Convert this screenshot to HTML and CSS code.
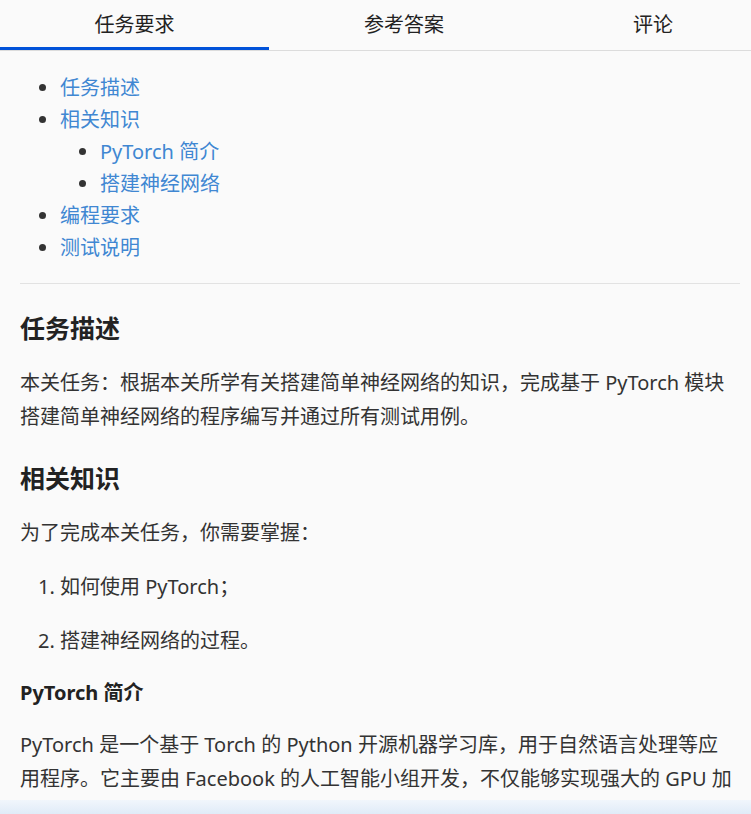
FILE: index.html
```html
<!DOCTYPE html>
<html lang="zh-CN">
<head>
<meta charset="utf-8">
<title>任务要求</title>
<link rel="stylesheet" href="styles.css">
</head>
<body>
<div class="tabs">
  <div class="tab tab-1 active">任务要求</div>
  <div class="tab tab-2">参考答案</div>
  <div class="tab tab-3">评论</div>
</div>
<div class="content">
  <ul class="toc">
    <li><a>任务描述</a></li>
    <li><a>相关知识</a>
      <ul>
        <li><a>PyTorch 简介</a></li>
        <li><a>搭建神经网络</a></li>
      </ul>
    </li>
    <li><a>编程要求</a></li>
    <li><a>测试说明</a></li>
  </ul>
  <hr class="rule">
  <h2>任务描述</h2>
  <p>本关任务：根据本关所学有关搭建简单神经网络的知识，完成基于 PyTorch 模块搭建简单神经网络的程序编写并通过所有测试用例。</p>
  <h2>相关知识</h2>
  <p>为了完成本关任务，你需要掌握：</p>
  <ol class="steps">
    <li><p>如何使用 PyTorch；</p></li>
    <li><p>搭建神经网络的过程。</p></li>
  </ol>
  <h3>PyTorch 简介</h3>
  <p>PyTorch 是一个基于 Torch 的 Python 开源机器学习库，用于自然语言处理等应用程序。它主要由 Facebook 的人工智能小组开发，不仅能够实现强大的 GPU 加速，同时还支持动态神经网络。</p>
</div>
<div class="bottom-fade"></div>
</body>
</html>
```

FILE: styles.css
```css
html, body {
  margin: 0;
  padding: 0;
  background: #fafafa;
}
body {
  font-family: "Noto Sans", "Noto Sans CJK SC", sans-serif;
  font-size: 20px;
  color: #333;
  overflow: hidden;
  height: 814px;
}
.tabs {
  display: flex;
  height: 50px;
  border-bottom: 1px solid #dcdcdc;
  width: 767px;
}
.tab {
  position: relative;
  text-align: center;
  line-height: 50px;
  font-size: 20px;
  color: #222;
  flex: none;
}
.tab-1 { width: 269px; }
.tab-2 { width: 270px; }
.tab-3 { width: 228px; }
.tab.active::after {
  content: "";
  position: absolute;
  left: 0;
  right: 0;
  bottom: 0;
  height: 3px;
  background: #0052d9;
}
.content {
  padding: 0 11px 0 20px;
}
.toc {
  margin: 21px 0 0;
  padding-left: 40px;
  line-height: 32px;
  color: #333;
  list-style: disc;
}
.toc ul {
  margin: 0;
  padding-left: 40px;
  list-style: disc;
}
.toc a {
  color: #4087d2;
  text-decoration: none;
}
.rule {
  border: 0;
  border-top: 1px solid #e2e2e2;
  margin: 19px 0 0;
  width: 720px;
}
h2 {
  font-size: 25px;
  line-height: 36px;
  font-weight: 700;
  color: #222;
  margin: 26px 0 20px;
}
h3 {
  font-size: 20px;
  line-height: 30px;
  font-weight: 700;
  color: #222;
  margin: 20px 0;
}
p {
  margin: 20px 0;
  line-height: 34px;
  width: 712px;
}
.steps {
  margin: 0;
  padding-left: 40px;
}
.steps p {
  width: auto;
}
.bottom-fade {
  position: fixed;
  left: 0;
  right: 0;
  bottom: 0;
  height: 14px;
  background: linear-gradient(to bottom, #f1f6fc, #e0ebf8);
}
```
